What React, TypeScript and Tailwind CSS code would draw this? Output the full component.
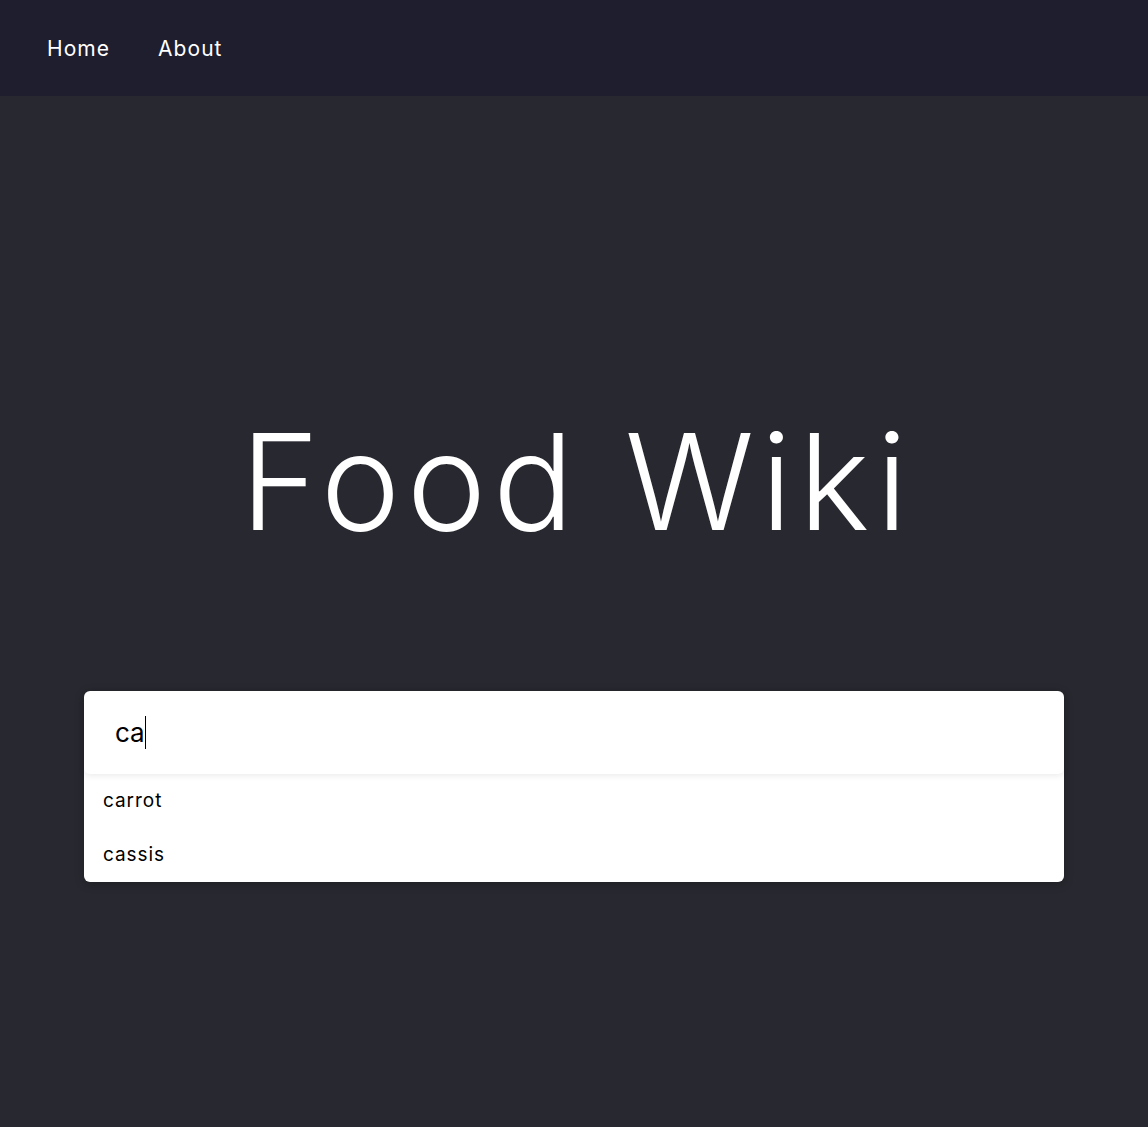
import { useState } from "react";

const SUGGESTIONS = ["carrot", "cassis"];

export default function App() {
  const [query, setQuery] = useState("ca");

  return (
    <div className="min-h-screen bg-[#282830] font-['Inter','Noto_Sans',sans-serif] text-white">
      <nav className="h-24 bg-[#1e1e2e] flex items-center px-[47px] gap-[48px] pt-[2px]">
        <a href="#" className="text-[21px] tracking-[0.05em] text-white">Home</a>
        <a href="#" className="text-[21px] tracking-[0.05em] text-white">About</a>
      </nav>

      <main className="flex flex-col items-center">
        <h1 className="mt-[318px] text-[134px] leading-none font-light tracking-[0.05em] pl-[0.05em]">Food Wiki</h1>

        <div className="mt-[143px] w-[980px] bg-white rounded-md shadow-[0_2px_10px_rgba(0,0,0,0.25)]">
          <div className="relative h-[83px] rounded-md shadow-[0_2px_6px_rgba(0,0,0,0.08)] flex items-center px-[31px]">
            <input
              value={query}
              onChange={(e) => setQuery(e.target.value)}
              className="w-full text-[26px] text-black caret-black outline-none bg-transparent"
            />
            {/* caret, the input is shown focused */}
            <span className="absolute left-[61px] top-[25px] w-px h-[33px] bg-black" />
          </div>
          <ul>
            {SUGGESTIONS.map((s) => (
              <li key={s} className="h-[54px] flex items-center px-[19px] text-[19px] tracking-[0.05em] text-black">
                {s}
              </li>
            ))}
          </ul>
        </div>
      </main>
    </div>
  );
}
